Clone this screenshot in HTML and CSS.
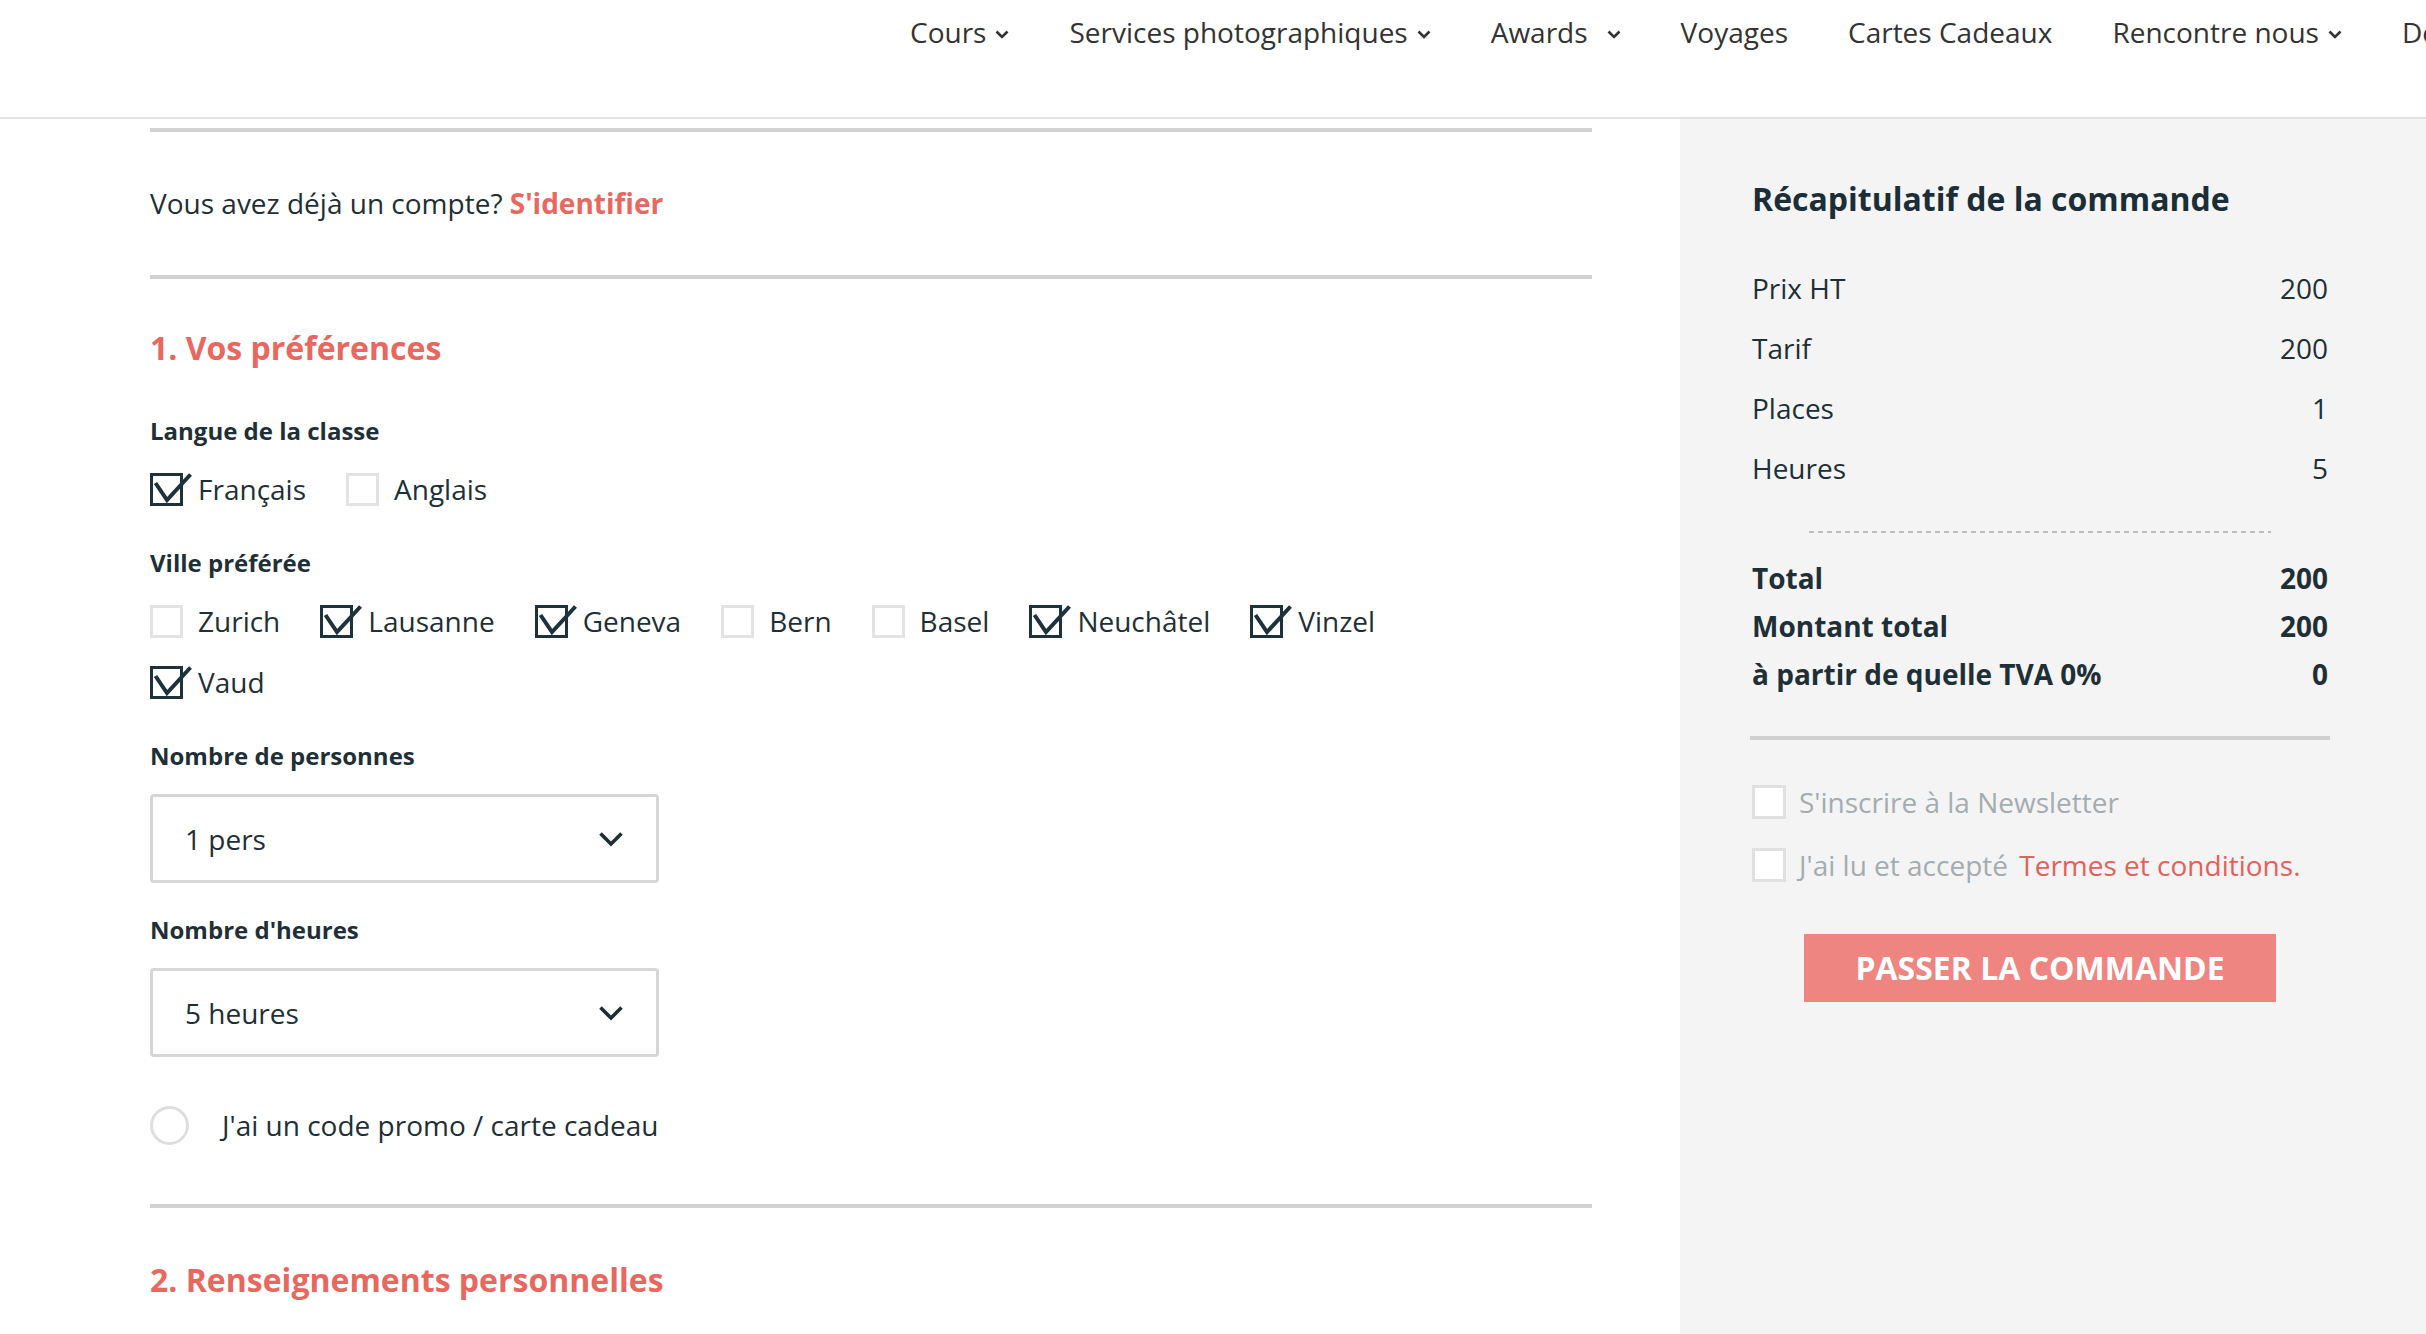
FILE: index.html
```html
<!DOCTYPE html>
<html lang="fr">
<head>
<meta charset="utf-8">
<title>Commande</title>
<link rel="stylesheet" href="styles.css">
</head>
<body>
<header class="topbar">
  <nav class="mainnav">
    <a class="nav-item" href="#">Cours<svg class="nav-chev" viewBox="0 0 14 9"><path d="M1.5 1.5 L7 7 L12.5 1.5"/></svg></a>
    <a class="nav-item" href="#">Services photographiques<svg class="nav-chev" viewBox="0 0 14 9"><path d="M1.5 1.5 L7 7 L12.5 1.5"/></svg></a>
    <a class="nav-item" href="#">Awards<svg class="nav-chev nav-chev-wide" viewBox="0 0 14 9"><path d="M1.5 1.5 L7 7 L12.5 1.5"/></svg></a>
    <a class="nav-item" href="#">Voyages</a>
    <a class="nav-item" href="#">Cartes Cadeaux</a>
    <a class="nav-item" href="#">Rencontre nous<svg class="nav-chev" viewBox="0 0 14 9"><path d="M1.5 1.5 L7 7 L12.5 1.5"/></svg></a>
    <a class="nav-item" href="#">Devenir membre</a>
  </nav>
</header>

<div class="layout">
  <main class="checkout">
    <hr class="rule">
    <p class="login">Vous avez déjà un compte? <a href="#" class="login-link">S'identifier</a></p>
    <hr class="rule">

    <section class="step">
      <h2 class="step-title">1. Vos préférences</h2>

      <div class="field field-first">
        <h3 class="field-label">Langue de la classe</h3>
        <div class="choices">
          <label class="choice"><span class="box is-checked"><svg viewBox="0 0 44 36"><path d="M5.5 10 L17 27 L40.5 1.5"/></svg></span>Français</label>
          <label class="choice"><span class="box"></span>Anglais</label>
        </div>
      </div>

      <div class="field">
        <h3 class="field-label">Ville préférée</h3>
        <div class="choices">
          <label class="choice"><span class="box"></span>Zurich</label>
          <label class="choice"><span class="box is-checked"><svg viewBox="0 0 44 36"><path d="M5.5 10 L17 27 L40.5 1.5"/></svg></span>Lausanne</label>
          <label class="choice"><span class="box is-checked"><svg viewBox="0 0 44 36"><path d="M5.5 10 L17 27 L40.5 1.5"/></svg></span>Geneva</label>
          <label class="choice"><span class="box"></span>Bern</label>
          <label class="choice"><span class="box"></span>Basel</label>
          <label class="choice"><span class="box is-checked"><svg viewBox="0 0 44 36"><path d="M5.5 10 L17 27 L40.5 1.5"/></svg></span>Neuchâtel</label>
          <label class="choice"><span class="box is-checked"><svg viewBox="0 0 44 36"><path d="M5.5 10 L17 27 L40.5 1.5"/></svg></span>Vinzel</label>
          <label class="choice"><span class="box is-checked"><svg viewBox="0 0 44 36"><path d="M5.5 10 L17 27 L40.5 1.5"/></svg></span>Vaud</label>
        </div>
      </div>

      <div class="field">
        <h3 class="field-label">Nombre de personnes</h3>
        <div class="select"><span>1 pers</span><svg class="select-chev" viewBox="0 0 26 16"><path d="M2.5 2.5 L13 13 L23.5 2.5"/></svg></div>
      </div>

      <div class="field field-tight">
        <h3 class="field-label">Nombre d'heures</h3>
        <div class="select"><span>5 heures</span><svg class="select-chev" viewBox="0 0 26 16"><path d="M2.5 2.5 L13 13 L23.5 2.5"/></svg></div>
      </div>

      <label class="promo"><span class="radio"></span>J'ai un code promo / carte cadeau</label>
    </section>

    <hr class="rule rule-bottom">

    <section class="step">
      <h2 class="step-title step-two">2. Renseignements personnelles</h2>
    </section>
  </main>

  <aside class="summary">
    <h2 class="summary-title">Récapitulatif de la commande</h2>
    <div class="lines">
      <div class="line"><span>Prix HT</span><span>200</span></div>
      <div class="line"><span>Tarif</span><span>200</span></div>
      <div class="line"><span>Places</span><span>1</span></div>
      <div class="line"><span>Heures</span><span>5</span></div>
    </div>
    <div class="dash"></div>
    <div class="lines totals">
      <div class="line"><span>Total</span><span>200</span></div>
      <div class="line"><span>Montant total</span><span>200</span></div>
      <div class="line"><span>à partir de quelle TVA 0%</span><span>0</span></div>
    </div>
    <div class="summary-rule"></div>
    <label class="opt opt-first"><span class="box box-light"></span><span>S'inscrire à la Newsletter</span></label>
    <label class="opt"><span class="box box-light"></span><span>J'ai lu et accepté <a href="#" class="terms-link">Termes et conditions.</a></span></label>
    <button class="order-btn" type="button">Passer la commande</button>
  </aside>
</div>
</body>
</html>
```

FILE: styles.css
```css
* { box-sizing: border-box; }
html, body { margin: 0; padding: 0; }
body {
  font-family: "Open Sans", "Liberation Sans", sans-serif;
  color: #1f2f37;
  background: #fff;
  width: 2426px;
  height: 1334px;
  overflow: hidden;
}
a { text-decoration: none; color: inherit; }
h2, h3, p { margin: 0; }

/* header */
.topbar {
  height: 119px;
  border-bottom: 2px solid #e2e2e2;
  padding: 13px 0 0 880px;
  overflow: hidden;
}
.mainnav { display: flex; white-space: nowrap; }
.nav-item {
  flex: none;
  display: flex;
  align-items: center;
  padding: 0 30px;
  font-size: 28px;
  line-height: 38px;
  color: #333;
}
.nav-chev {
  width: 14px;
  height: 9px;
  margin: 4px 0 0 9px;
  fill: none;
  stroke: #333;
  stroke-width: 2.6;
}
.nav-chev-wide { margin-left: 19px; }

/* layout */
.layout { display: flex; height: 1215px; }
.checkout {
  flex: none;
  width: 1680px;
  padding: 9px 88px 0 150px;
}
.summary {
  flex: 1;
  background: #f4f4f4;
  padding: 58px 98px 0 72px;
}

.rule {
  border: 0;
  margin: 0;
  height: 4px;
  background: #d2d2d2;
}
.rule-bottom { margin-top: 59px; }

.login {
  padding: 51px 0 52px;
  font-size: 28px;
  line-height: 40px;
}
.login-link { color: #e8675f; font-weight: 700; }

.step-title {
  margin-top: 47px;
  font-size: 32px;
  line-height: 44px;
  font-weight: 700;
  color: #e8675f;
}
.step-two { margin-top: 50px; }

.field { margin-top: 36px; }
.field-first { margin-top: 43px; }
.field-tight { margin-top: 29px; }
.field-label {
  font-size: 24px;
  line-height: 36px;
  font-weight: 700;
  margin-bottom: 20px;
}

.choices {
  display: flex;
  flex-wrap: wrap;
  column-gap: 40px;
  row-gap: 21px;
  max-width: 1300px;
}
.choice {
  display: flex;
  align-items: center;
  gap: 15px;
  height: 40px;
  font-size: 28px;
}
.box {
  position: relative;
  flex: none;
  width: 33px;
  height: 33px;
  border: 3px solid #e3e3e3;
  background: #fff;
}
.box.is-checked { border-color: #1d323a; }
.box svg {
  position: absolute;
  left: -3px;
  top: -3px;
  width: 44px;
  height: 36px;
  overflow: visible;
  fill: none;
  stroke: #1d323a;
  stroke-width: 4;
}

.select {
  display: flex;
  align-items: center;
  justify-content: space-between;
  width: 509px;
  height: 89px;
  border: 3px solid #d6d6d6;
  border-radius: 4px;
  padding: 0 32px;
  font-size: 28px;
  background: #fff;
}
.select-chev {
  width: 26px;
  height: 16px;
  fill: none;
  stroke: #1d2e36;
  stroke-width: 3.6;
}

.promo {
  display: flex;
  align-items: center;
  gap: 33px;
  height: 40px;
  margin-top: 48px;
  font-size: 28px;
}
.radio {
  flex: none;
  width: 39px;
  height: 39px;
  border-radius: 50%;
  border: 3px solid #dedede;
  background: #fff;
}

/* summary */
.summary-title {
  font-size: 32px;
  line-height: 44px;
  font-weight: 700;
  color: #1b2e37;
}
.lines {
  margin-top: 47px;
  display: flex;
  flex-direction: column;
  gap: 20px;
}
.line {
  display: flex;
  justify-content: space-between;
  font-size: 28px;
  line-height: 40px;
}
.dash {
  margin: 43px 57px 0;
  height: 2px;
  background-image: linear-gradient(to right, #bdbdbd 5px, transparent 5px);
  background-size: 9px 2px;
}
.totals {
  margin-top: 25px;
  gap: 8px;
  font-weight: 700;
}
.summary-rule {
  margin: 42px -2px 0;
  height: 4px;
  background: #d0d0d0;
}
.opt {
  display: flex;
  align-items: center;
  gap: 13px;
  height: 40px;
  margin-top: 23px;
  font-size: 28px;
  color: #a4acb0;
}
.opt-first { margin-top: 42px; }
.box-light {
  width: 34px;
  height: 34px;
  border: 3px solid #e0e0e0;
  background: #fff;
}
.terms-link { color: #e2625b; margin-left: 4px; }

.order-btn {
  display: block;
  margin: 49px auto 0;
  width: 472px;
  height: 68px;
  border: 0;
  background: #ef8580;
  color: #fff;
  font-family: "Open Sans", "Liberation Sans", sans-serif;
  font-size: 32px;
  line-height: 68px;
  font-weight: 700;
  text-transform: uppercase;
  padding: 0;
}
```
